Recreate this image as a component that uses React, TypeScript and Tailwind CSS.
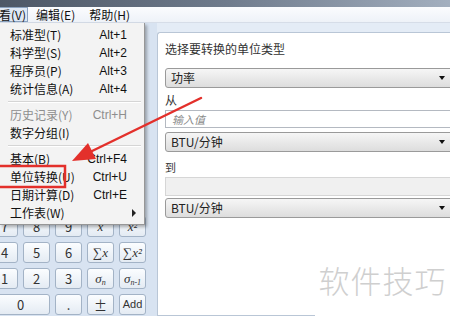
import React from "react";

const CJK = { fontFamily: '"Noto Sans CJK SC", "Liberation Sans", sans-serif' };

const menuItems: { label?: string; key?: string; disabled?: boolean; sub?: boolean; sep?: boolean }[] = [
  { label: "标准型(T)", key: "Alt+1" },
  { label: "科学型(S)", key: "Alt+2" },
  { label: "程序员(P)", key: "Alt+3" },
  { label: "统计信息(A)", key: "Alt+4" },
  { sep: true },
  { label: "历史记录(Y)", key: "Ctrl+H", disabled: true },
  { label: "数字分组(I)" },
  { sep: true },
  { label: "基本(B)", key: "Ctrl+F4" },
  { label: "单位转换(U)", key: "Ctrl+U" },
  { label: "日期计算(D)", key: "Ctrl+E" },
  { label: "工作表(W)", sub: true },
];

const Stat = ({ children }: { children: React.ReactNode }) => (
  <span className="italic" style={{ fontFamily: '"Liberation Serif", serif' }}>
    {children}
  </span>
);

const rows: React.ReactNode[][] = [
  ["7", "8", "9", <Stat>x̄</Stat>, <Stat>x̄²</Stat>],
  ["4", "5", "6", <Stat>∑x</Stat>, <Stat>∑x²</Stat>],
  [
    "1",
    "2",
    "3",
    <Stat>
      σ<sub className="text-[8px]">n</sub>
    </Stat>,
    <Stat>
      σ<sub className="text-[8px]">n-1</sub>
    </Stat>,
  ],
];

function CalcButton({ children, wide = false }: { children: React.ReactNode; wide?: boolean }) {
  return (
    <div
      className={`${wide ? "w-[59px]" : "w-[27px]"} h-[21px] shrink-0 flex items-center justify-center rounded-[3px] border border-[#a3b3c6] bg-gradient-to-b from-[#fbfdff] to-[#e4ebf3] text-[13px] text-[#333]`}
    >
      {children}
    </div>
  );
}

function Select({ value }: { value: string }) {
  return (
    <div className="w-[290px] h-[20px] flex items-center justify-between rounded-[3px] border border-[#9a9a9a] bg-gradient-to-b from-[#f6f6f6] to-[#dddddd] pl-[5px] pr-[9px] text-[12px] text-[#222]">
      <span className="leading-none">{value}</span>
      <span className="w-0 h-0 border-l-[3px] border-r-[3px] border-t-[4px] border-l-transparent border-r-transparent border-t-[#111]" />
    </div>
  );
}

export default function App() {
  return (
    <div className="relative w-[450px] h-[316px] overflow-hidden bg-[#d8e3f1] flex flex-col" style={CJK}>
      {/* title bar */}
      <div className="h-[7px] bg-gradient-to-r from-[#4d5766] via-[#6f7b8c] to-[#a3afbf]" />
      {/* menu bar */}
      <div className="h-[16px] flex items-center bg-gradient-to-b from-[#fbfcfe] to-[#eef2f8] border-b border-[#d6dde8] text-[12px] text-[#111]">
        <div className="ml-[-16px] h-[15px] flex items-center pl-[2px] pr-[1px] border border-[#8ba2bf] bg-[#dfe8f4] leading-none">查看(V)</div>
        <span className="ml-[8px] leading-none">编辑(E)</span>
        <span className="ml-[14px] leading-none">帮助(H)</span>
      </div>

      {/* body */}
      <div className="flex-1 flex">
        {/* calculator keys */}
        <div className="w-[157px] shrink-0 flex flex-col justify-end gap-[5px] pb-[1px]">
          {rows.map((r, i) => (
            <div key={i} className="flex gap-[5px] ml-[-9px]">
              {r.map((c, j) => (
                <CalcButton key={j}>{c}</CalcButton>
              ))}
            </div>
          ))}
          <div className="flex gap-[5px] ml-[-9px] h-[21px]">
            <CalcButton wide>0</CalcButton>
            <CalcButton>.</CalcButton>
            <CalcButton>±</CalcButton>
            <CalcButton>
              <span className="text-[11px]" style={{ fontFamily: '"Liberation Sans", sans-serif' }}>Add</span>
            </CalcButton>
          </div>
        </div>

        {/* converter panel */}
        <div className="flex-1 flex flex-col bg-[#e4ecf6] pt-[9px]">
          <div className="flex-1 bg-white border-l border-t border-b border-[#b9c6d6] rounded-tl-[3px] pl-[7px] overflow-hidden text-[12px] text-[#333]">
            <div className="mt-[8px] h-[16px] leading-[16px]">选择要转换的单位类型</div>
            <div className="mt-[11px]">
              <Select value="功率" />
            </div>
            <div className="mt-[5px] h-[14px] leading-[14px]">从</div>
            <div className="mt-[3px] w-[290px] h-[18px] border border-[#b4b9c1] bg-white flex items-center pl-[6px] text-[11px] italic text-[#8a8a8a]">
              输入值
            </div>
            <div className="mt-[4px]">
              <Select value="BTU/分钟" />
            </div>
            <div className="mt-[8px] h-[14px] leading-[14px] text-[11px]">到</div>
            <div className="mt-[3px] w-[290px] h-[19px] border border-[#d6d6d6] bg-[#f0f0f0]" />
            <div className="mt-[2px]">
              <Select value="BTU/分钟" />
            </div>
          </div>
        </div>
      </div>

      {/* open view menu */}
      <div className="absolute left-0 top-[23px] w-[145px] pt-[3px] pb-[2px] bg-[#f3f3f3] border-r border-b border-[#979797] shadow-[2px_2px_3px_rgba(0,0,0,0.3)] text-[12px] text-[#111]">
        {menuItems.map((m, i) =>
          m.sep ? (
            <div key={i} className="h-[8px] flex flex-col justify-center pl-[8px] pr-[3px]">
              <div className="h-px bg-[#d5d5d5]" />
              <div className="h-px bg-white" />
            </div>
          ) : (
            <div
              key={i}
              className={`h-[18px] flex items-center justify-between pl-[10px] pr-[17px] ${m.disabled ? "text-[#8e8e8e]" : ""}`}
            >
              <span className="leading-none">{m.label}</span>
              {m.key && (
                <span className="leading-none" style={{ fontFamily: '"Liberation Sans", sans-serif' }}>
                  {m.key}
                </span>
              )}
              {m.sub && (
                <span className="mr-[-9px] w-0 h-0 border-t-[4px] border-b-[4px] border-l-[4px] border-t-transparent border-b-transparent border-l-[#222]" />
              )}
            </div>
          )
        )}
      </div>

      {/* watermark */}
      <div className="absolute right-0 bottom-0 w-[135px] h-[56px] bg-white flex items-start justify-center pt-[4px] text-[31px] font-light text-[#cfcfcf] leading-none tracking-[1px]">
        软件技巧
      </div>

      {/* annotation */}
      <svg className="absolute inset-0 pointer-events-none" width="450" height="316" viewBox="0 0 450 316">
        <rect x="-4" y="166" width="69" height="21" fill="none" stroke="#e3302b" strokeWidth="2.5" />
        <line x1="201" y1="98" x2="88" y2="153" stroke="#e3302b" strokeWidth="2.5" strokeLinecap="round" />
        <polygon points="72,161 88,143 96,159" fill="#e3302b" />
      </svg>
    </div>
  );
}
